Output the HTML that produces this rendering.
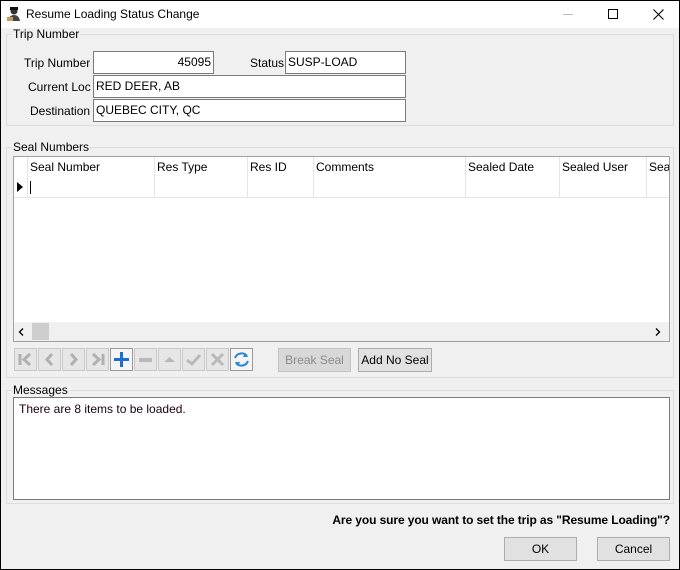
<!DOCTYPE html>
<html><head><style>
*{box-sizing:border-box;margin:0;padding:0}
body{width:680px;height:570px;background:#f0f0f0;font-family:"Liberation Sans",sans-serif;font-size:12px;color:#000;position:relative;overflow:hidden}
.a{position:absolute}
.frame{position:absolute;left:0;top:0;width:680px;height:570px;border:1px solid #000;pointer-events:none}
.grp{position:absolute;border:1px solid #dcdcdc}
.lbl{position:absolute;background:#f0f0f0;padding:0 1px;line-height:13px}
.tb{position:absolute;background:#fff;border:1px solid #7a7a7a;height:23px;line-height:21px;padding:0 2px;white-space:nowrap}
.hd{position:absolute;top:0;height:21px;line-height:21px;border-right:1px solid #e5e5e5;padding-left:2px;white-space:nowrap;overflow:hidden}
.rw{position:absolute;top:21px;height:20px;border-right:1px solid #e5e5e5;border-bottom:1px solid #e5e5e5}
.nb{position:absolute;top:348px;width:23px;height:23px;border:1px solid #c8c8c8;background:#e6e6e6}
.btn{position:absolute;height:24px;border:1px solid #adadad;background:#e1e1e1;text-align:center;line-height:22px}
</style></head><body>
<div class="a" style="left:0;top:0;width:680px;height:28px;background:#fff"></div>
<svg class="a" style="left:6px;top:6px" width="16" height="16" viewBox="0 0 16 16"><circle cx="8" cy="5" r="3.5" fill="#333"/><rect x="4" y="1" width="8" height="3" fill="#111"/><path d="M2 15 Q3 9 8 9 Q13 9 14 15Z" fill="#444"/><rect x="1" y="11" width="6" height="4" fill="#c89a5a"/></svg>
<div class="a" style="left:26px;top:7px;font-size:12px">Resume Loading Status Change</div>
<div class="a" style="left:563px;top:14px;width:10px;height:1px;background:#bbb"></div>
<div class="a" style="left:608px;top:9px;width:10px;height:10px;border:1px solid #000"></div>
<svg class="a" style="left:653px;top:9px" width="11" height="11"><path d="M0.5 0.5L10.5 10.5M10.5 0.5L0.5 10.5" stroke="#000" stroke-width="1.1"/></svg>

<div class="grp" style="left:6px;top:34px;width:668px;height:92px"></div>
<div class="lbl" style="left:12px;top:28px">Trip Number</div>
<div class="a" style="left:24px;top:56px">Trip Number</div>
<div class="tb" style="left:93px;top:51px;width:121px;text-align:right">45095</div>
<div class="a" style="left:250px;top:56px">Status</div>
<div class="tb" style="left:285px;top:51px;width:121px">SUSP-LOAD</div>
<div class="a" style="left:28px;top:80px">Current Loc</div>
<div class="tb" style="left:93px;top:75px;width:313px">RED DEER, AB</div>
<div class="a" style="left:30px;top:104px">Destination</div>
<div class="tb" style="left:93px;top:99px;width:313px">QUEBEC CITY, QC</div>

<div class="grp" style="left:6px;top:147px;width:668px;height:231px"></div>
<div class="lbl" style="left:12px;top:141px">Seal Numbers</div>
<div class="a" style="left:13px;top:156px;width:657px;height:186px;background:#fff;border:1px solid #a0a0a0;overflow:hidden">
 <div class="hd" style="left:0;width:14px"></div>
 <div class="hd" style="left:14px;width:127px">Seal Number</div>
 <div class="hd" style="left:141px;width:93px">Res Type</div>
 <div class="hd" style="left:234px;width:66px">Res ID</div>
 <div class="hd" style="left:300px;width:152px">Comments</div>
 <div class="hd" style="left:452px;width:94px">Sealed Date</div>
 <div class="hd" style="left:546px;width:87px">Sealed User</div>
 <div class="hd" style="left:633px;width:30px">Sea</div>
 <div class="rw" style="left:0;width:14px"></div>
 <div class="rw" style="left:14px;width:127px"></div>
 <div class="rw" style="left:141px;width:93px"></div>
 <div class="rw" style="left:234px;width:66px"></div>
 <div class="rw" style="left:300px;width:152px"></div>
 <div class="rw" style="left:452px;width:94px"></div>
 <div class="rw" style="left:546px;width:87px"></div>
 <div class="rw" style="left:633px;width:30px"></div>
 <svg class="a" style="left:3px;top:25px" width="6" height="10"><path d="M0 0L6 5L0 10Z" fill="#000"/></svg>
 <div class="a" style="left:16px;top:24px;width:1px;height:13px;background:#000"></div>
 <div class="a" style="left:0;top:165px;width:655px;height:19px;background:#f0f0f0"></div>
 <svg class="a" style="left:4px;top:171px" width="6" height="8"><path d="M5 0.5L1.5 4L5 7.5" stroke="#000" stroke-width="1.3" fill="none"/></svg>
 <div class="a" style="left:18px;top:166px;width:17px;height:17px;background:#cdcdcd"></div>
 <svg class="a" style="left:641px;top:171px" width="6" height="8"><path d="M1 0.5L4.5 4L1 7.5" stroke="#000" stroke-width="1.3" fill="none"/></svg>
</div>

<div class="nb" style="left:14px"><svg width="21" height="21"><path d="M5 5V16M15 5L9 10.5L15 16" stroke="#b0b0b0" stroke-width="3" fill="none"/></svg></div>
<div class="nb" style="left:38px"><svg width="21" height="21"><path d="M13 5L8 10.5L13 16" stroke="#b0b0b0" stroke-width="3" fill="none"/></svg></div>
<div class="nb" style="left:62px"><svg width="21" height="21"><path d="M8 5L13 10.5L8 16" stroke="#b0b0b0" stroke-width="3" fill="none"/></svg></div>
<div class="nb" style="left:86px"><svg width="21" height="21"><path d="M16 5V16M6 5L12 10.5L6 16" stroke="#b0b0b0" stroke-width="3" fill="none"/></svg></div>
<div class="nb" style="left:110px;background:#f5f5f5;border-color:#9a9a9a"><svg width="21" height="21"><path d="M10.5 3V18M3 10.5H18" stroke="#1a6fd0" stroke-width="3"/></svg></div>
<div class="nb" style="left:134px"><svg width="21" height="21"><rect x="4" y="9" width="13" height="4" fill="#b8b8b8"/></svg></div>
<div class="nb" style="left:158px"><svg width="21" height="21"><path d="M5 13L10.5 8L16 13Z" fill="#b8b8b8"/></svg></div>
<div class="nb" style="left:182px"><svg width="21" height="21"><path d="M4 11L9 15L17 6" stroke="#b8b8b8" stroke-width="3" fill="none"/></svg></div>
<div class="nb" style="left:206px"><svg width="21" height="21"><path d="M5 5L16 16M16 5L5 16" stroke="#b8b8b8" stroke-width="3"/></svg></div>
<div class="nb" style="left:230px;background:#f5f5f5;border-color:#9a9a9a"><svg width="21" height="21"><path d="M4 9A7 7 0 0 1 16 7M17 12A7 7 0 0 1 5 14" stroke="#2a86d8" stroke-width="2" fill="none"/><path d="M14 4L17 8L12 8Z M7 17L4 13L9 13Z" fill="#2a86d8"/></svg></div>
<div class="btn" style="left:278px;top:348px;width:73px;color:#8a8a8a;background:#d8d8d8;border-color:#c4c4c4">Break Seal</div>
<div class="btn" style="left:358px;top:348px;width:74px">Add No Seal</div>

<div class="grp" style="left:6px;top:390px;width:668px;height:114px"></div>
<div class="lbl" style="left:12px;top:384px">Messages</div>
<div class="a" style="left:13px;top:397px;width:657px;height:103px;background:#fff;border:1px solid #7a7a7a;padding:4px 5px;color:#1a0010">There are 8 items to be loaded.</div>

<div class="a" style="right:10px;top:513px;font-weight:bold;letter-spacing:-0.1px">Are you sure you want to set the trip as "Resume Loading"?</div>
<div class="btn" style="left:504px;top:537px;width:73px">OK</div>
<div class="btn" style="left:597px;top:537px;width:73px">Cancel</div>
<div class="frame"></div>
</body></html>
